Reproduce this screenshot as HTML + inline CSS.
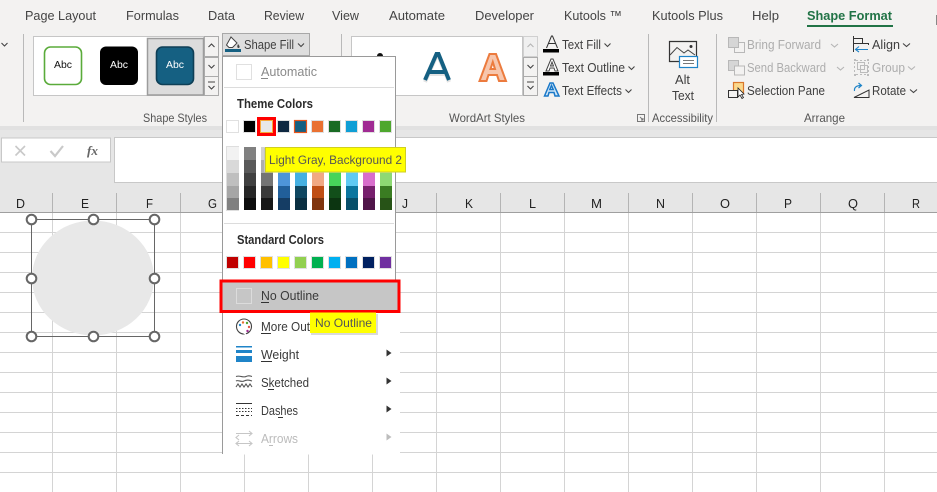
<!DOCTYPE html>
<html><head><meta charset="utf-8"><title>Shape Format</title>
<style>
html,body{margin:0;padding:0;background:#fff;width:937px;height:492px;overflow:hidden}
svg{display:block;font-family:"Liberation Sans",sans-serif}
text{font-size:12.5px;fill:#444}
.tab{font-size:13px;fill:#444}
.lab{font-size:12px;fill:#555}
.rb{fill:#3f3f3f}
.dis{fill:#adadad}
.mn{fill:#3a3a3a}
.b{font-weight:bold;fill:#2b2b2b;font-size:12.5px}
.chev{fill:none;stroke:#444;stroke-width:1.1}
.chevd{fill:none;stroke:#b5b5b5;stroke-width:1.1}
.hd{font-size:12.5px;fill:#222}
</style></head><body>
<svg width="937" height="492" viewBox="0 0 937 492" xmlns="http://www.w3.org/2000/svg">
<defs>
<pattern id="gv" width="64" height="20" patternUnits="userSpaceOnUse" x="52" y="212">
<path d="M.5 0V20M0 .5H64" stroke="#d4d4d4" fill="none"/>
</pattern>
</defs>
<!-- grid -->
<rect x="0" y="212" width="937" height="280" fill="#fff"/>
<rect x="0" y="212" width="937" height="280" fill="url(#gv)"/>
<!-- formula band -->
<rect x="0" y="126" width="937" height="86" fill="#e6e6e6"/>
<rect x="0" y="212" width="937" height="1" fill="#9f9f9f"/>
<g stroke="#b4b4b4"><path d="M52.5 193V212M116.5 193V212M180.5 193V212M244.5 193V212M308.5 193V212M372.5 193V212M436.5 193V212M500.5 193V212M564.5 193V212M628.5 193V212M692.5 193V212M756.5 193V212M820.5 193V212M884.5 193V212"/></g>
<g>
<text class="hd" x="16" y="208" textLength="9" lengthAdjust="spacingAndGlyphs">D</text>
<text class="hd" x="81" y="208" textLength="8" lengthAdjust="spacingAndGlyphs">E</text>
<text class="hd" x="146" y="208" textLength="7" lengthAdjust="spacingAndGlyphs">F</text>
<text class="hd" x="208" y="208" textLength="9" lengthAdjust="spacingAndGlyphs">G</text>
<text class="hd" x="402" y="208" textLength="6" lengthAdjust="spacingAndGlyphs">J</text>
<text class="hd" x="465" y="208" textLength="8" lengthAdjust="spacingAndGlyphs">K</text>
<text class="hd" x="529" y="208" textLength="7" lengthAdjust="spacingAndGlyphs">L</text>
<text class="hd" x="591" y="208" textLength="11" lengthAdjust="spacingAndGlyphs">M</text>
<text class="hd" x="656" y="208" textLength="9" lengthAdjust="spacingAndGlyphs">N</text>
<text class="hd" x="720" y="208" textLength="10" lengthAdjust="spacingAndGlyphs">O</text>
<text class="hd" x="784" y="208" textLength="8" lengthAdjust="spacingAndGlyphs">P</text>
<text class="hd" x="848" y="208" textLength="10" lengthAdjust="spacingAndGlyphs">Q</text>
<text class="hd" x="912" y="208" textLength="8" lengthAdjust="spacingAndGlyphs">R</text>
</g>
<!-- formula bar -->
<rect x="1.5" y="138" width="109" height="24" fill="#fff" stroke="#c8c8c8"/>
<path d="M15.5 146L25 155.500M25 146L15.500 155.500" stroke="#c9c9c9" stroke-width="1.600" fill="none"/>
<path d="M50.500 151L55 156L63 146" stroke="#c9c9c9" stroke-width="2.200" fill="none"/>
<text x="87" y="155" textLength="11" lengthAdjust="spacingAndGlyphs" style="font-family:'Liberation Serif',serif;font-style:italic;font-weight:bold;font-size:13px;fill:#666">fx</text>
<rect x="114.500" y="137.500" width="830" height="45" fill="#fff" stroke="#c8c8c8"/>
<!-- ribbon -->
<rect x="0" y="0" width="937" height="126" fill="#f3f2f1"/>
<rect x="0" y="126" width="937" height="4" fill="#e1e1e1"/>
<text class="tab" x="25" y="20" textLength="71" lengthAdjust="spacingAndGlyphs">Page Layout</text>
<text class="tab" x="126" y="20" textLength="53" lengthAdjust="spacingAndGlyphs">Formulas</text>
<text class="tab" x="208" y="20" textLength="27" lengthAdjust="spacingAndGlyphs">Data</text>
<text class="tab" x="264" y="20" textLength="40" lengthAdjust="spacingAndGlyphs">Review</text>
<text class="tab" x="332" y="20" textLength="27" lengthAdjust="spacingAndGlyphs">View</text>
<text class="tab" x="389" y="20" textLength="56" lengthAdjust="spacingAndGlyphs">Automate</text>
<text class="tab" x="475" y="20" textLength="59" lengthAdjust="spacingAndGlyphs">Developer</text>
<text class="tab" x="564" y="20" textLength="58" lengthAdjust="spacingAndGlyphs">Kutools ™</text>
<text class="tab" x="652" y="20" textLength="71" lengthAdjust="spacingAndGlyphs">Kutools Plus</text>
<text class="tab" x="752" y="20" textLength="27" lengthAdjust="spacingAndGlyphs">Help</text>
<text class="tab" x="807" y="20" textLength="85" lengthAdjust="spacingAndGlyphs" style="fill:#217346;font-weight:bold;font-size:12.500px">Shape Format</text>
<rect x="807" y="25" width="86" height="2" fill="#217346"/>
<rect x="936" y="15" width="1" height="10" fill="#888"/>
<path class="chev" d="M1.500 43L4.500 46L7.500 43"/>
<!-- separators -->
<g stroke="#b9b9b9"><path d="M23.500 34V122M341.500 34V122M648.500 34V122M716.500 34V122"/></g>
<!-- Shape styles gallery -->
<rect x="33.500" y="36.500" width="170" height="59" fill="#fff" stroke="#c6c6c6"/>
<rect x="44.500" y="47" width="37" height="37.500" rx="6" fill="#fff" stroke="#5aab3a" stroke-width="1.600"/>
<text x="54" y="68" textLength="18" lengthAdjust="spacingAndGlyphs" style="font-size:10.500px;fill:#111">Abc</text>
<rect x="100" y="46.500" width="38" height="38.500" rx="6" fill="#000"/>
<text x="110" y="68" textLength="18" lengthAdjust="spacingAndGlyphs" style="font-size:10.500px;fill:#fff">Abc</text>
<rect x="147.500" y="38.500" width="56" height="56.500" fill="#dcdcdc" stroke="#9c9c9c" stroke-width="1.500"/>
<rect x="156.500" y="47" width="37" height="37.500" rx="6" fill="#156082" stroke="#0e3f56" stroke-width="1.600"/>
<text x="166" y="68" textLength="18" lengthAdjust="spacingAndGlyphs" style="font-size:10.500px;fill:#fff">Abc</text>
<g fill="#f3f2f1" stroke="#ababab"><rect x="204.500" y="36.500" width="14" height="20"/><rect x="204.500" y="57.500" width="14" height="19"/><rect x="204.500" y="76.500" width="14" height="19"/></g>
<path class="chev" d="M208.500 47L211.500 44L214.500 47M208.500 65L211.500 68L214.500 65M208 82H215M208.500 86L211.500 89L214.500 86"/>
<text class="lab" x="143" y="122" textLength="64" lengthAdjust="spacingAndGlyphs">Shape Styles</text>
<!-- WordArt gallery -->
<rect x="351.500" y="36.500" width="171" height="59" fill="#fff" stroke="#c6c6c6"/>
<circle cx="380" cy="56" r="3" fill="#111"/>
<path d="M425 80L436.500 54H438.500L449 80M429.500 72H445" fill="none" stroke="#e3e3e3" stroke-width="4" transform="translate(0,2)"/>
<path d="M425 80L436.500 54H438.500L449 80M429.500 72H445" fill="none" stroke="#156082" stroke-width="4"/>
<path d="M479.500 81L489.500 54H496L506 81H499L497 75H488.500L486.500 81ZM490.500 69H495L492.800 62Z" fill="#f7c6ad" stroke="#ec7b3e" stroke-width="2"/>
<g stroke="#ababab"><rect x="523.500" y="36.500" width="14" height="20" fill="#f0f0f0" stroke="#d0d0d0"/><rect x="523.500" y="57.500" width="14" height="19" fill="#f3f2f1"/><rect x="523.500" y="76.500" width="14" height="19" fill="#f3f2f1"/></g>
<path class="chevd" d="M527.500 47L530.500 44L533.500 47"/>
<path class="chev" d="M527.500 65L530.500 68L533.500 65M527 82H534M527.500 86L530.500 89L533.500 86"/>
<text class="lab" x="449" y="122" textLength="76" lengthAdjust="spacingAndGlyphs">WordArt Styles</text>
<path d="M637.500 114.500H644.500V121.500H637.500ZM640 117L643 120M643 118V120H641" fill="none" stroke="#777"/>
<!-- text fill etc -->
<path d="M546.500 48L551.500 36H552.500L557.500 48M548.500 43.500H555.500" fill="none" stroke="#333" stroke-width="1"/>
<rect x="543" y="49" width="16" height="3.500" fill="#000"/>
<text class="rb" x="562" y="49" textLength="39" lengthAdjust="spacingAndGlyphs">Text Fill</text>
<path class="chev" d="M604.500 43.500L607.500 46.500L610.500 43.500"/>
<path d="M546 71L551 59H553L558 71H555L554 68H550L549 71ZM550.500 66H553.500L552 62Z" fill="#fff" stroke="#444" stroke-width="1"/>
<rect x="543" y="72" width="16" height="3.500" fill="#000"/>
<text class="rb" x="562" y="72" textLength="63" lengthAdjust="spacingAndGlyphs">Text Outline</text>
<path class="chev" d="M628.500 66.500L631.500 69.500L634.500 66.500"/>
<path d="M544.500 96L550 83H553L559 96H555L554 92.500H549L548 96ZM549.800 89.500H553.200L551.500 85.500Z" fill="#cfe5f7" stroke="#1978c8" stroke-width="1.500"/>
<text class="rb" x="562" y="95" textLength="60" lengthAdjust="spacingAndGlyphs">Text Effects</text>
<path class="chev" d="M625.500 89.500L628.500 92.500L631.500 89.500"/>
<!-- alt text -->
<path d="M679 61.500H669.500V41.500H696.500V56" fill="none" stroke="#333" stroke-width="1.200"/>
<path d="M670 55L677 47.500L684 53L688 50L695 55" fill="none" stroke="#444"/>
<circle cx="691" cy="46.500" r="1.500" fill="#333"/>
<rect x="679.500" y="56.500" width="18" height="11" fill="#fff" stroke="#1f84c8" stroke-width="1.200"/>
<path d="M683 60.500H694M683 63.500H694" stroke="#777"/>
<text class="rb" x="675" y="84" textLength="15" lengthAdjust="spacingAndGlyphs">Alt</text>
<text class="rb" x="672" y="100" textLength="22" lengthAdjust="spacingAndGlyphs">Text</text>
<text class="lab" x="652" y="122" textLength="61" lengthAdjust="spacingAndGlyphs">Accessibility</text>
<!-- arrange -->
<rect x="728.500" y="37.500" width="10" height="10" fill="#d6d6d6" stroke="#b8b8b8"/>
<path d="M738.500 42.500H744.500V52.500H734.500V47.500" fill="none" stroke="#b8b8b8"/>
<text class="dis" x="747" y="49" textLength="74" lengthAdjust="spacingAndGlyphs">Bring Forward</text>
<path class="chevd" d="M831 44L834.500 47L838 44"/>
<path d="M728.500 60.500H738.500V66H734.500V70.500H728.500Z" fill="#d6d6d6" stroke="#b8b8b8"/>
<rect x="734.500" y="66" width="10" height="9" fill="#f3f2f1" stroke="#b8b8b8"/>
<text class="dis" x="747" y="72" textLength="79" lengthAdjust="spacingAndGlyphs">Send Backward</text>
<path class="chevd" d="M837 67L840.500 70L844 67"/>
<rect x="733.500" y="82.500" width="10" height="10" fill="#fcd88a" stroke="#d9772c" stroke-width="1.200"/>
<rect x="728.500" y="90.500" width="9" height="7" fill="#f3f2f1" stroke="#333"/>
<path d="M738 88L738 97L740 95L742 98.500L743.500 97.500L741.500 94.500L744 94Z" fill="#fff" stroke="#222" stroke-width=".8"/>
<text class="rb" x="747" y="95" textLength="78" lengthAdjust="spacingAndGlyphs">Selection Pane</text>
<path d="M853.500 36V52" stroke="#333"/>
<path d="M854 38.500H862.500V43.500H854M854 43.500H868.500V45" fill="none" stroke="#333"/>
<path d="M868 49.500H856M859 46.500L855.500 49.500L859 52" fill="none" stroke="#1f84c8" stroke-width="1.100"/>
<text class="rb" x="872" y="49" textLength="28" lengthAdjust="spacingAndGlyphs">Align</text>
<path class="chev" d="M903 43.500L906.500 46.500L910 43.500"/>
<g fill="none" stroke="#bcbcbc"><path d="M854 60H856M867 60H869M854 75H856M867 75H869" stroke-width="2"/><rect x="857.500" y="62.500" width="7" height="7"/><rect x="860.500" y="65.500" width="7" height="7"/><path d="M854.500 62V73M868.500 62V73M856 60.500H867M856 74.500H867" stroke-dasharray="2 2"/></g>
<text class="dis" x="872" y="72" textLength="33" lengthAdjust="spacingAndGlyphs">Group</text>
<path class="chevd" d="M908 66.500L911.500 69.500L915 66.500"/>
<path d="M854 97.500L869 90V97.500Z" fill="none" stroke="#333"/>
<path d="M854.500 91C854 87 857 85.500 861 85.500M858.500 83L861.500 85.500L858.500 88" fill="none" stroke="#1f84c8" stroke-width="1.200"/>
<text class="rb" x="872" y="95" textLength="34" lengthAdjust="spacingAndGlyphs">Rotate</text>
<path class="chev" d="M910 89.500L913.500 92.500L917 89.500"/>
<text class="lab" x="804" y="122" textLength="41" lengthAdjust="spacingAndGlyphs">Arrange</text>
<!-- shape -->
<ellipse cx="93" cy="278" rx="61" ry="57.500" fill="#e8e8e8"/>
<rect x="31.500" y="219.500" width="123" height="117" fill="none" stroke="#666"/>
<g fill="#fff" stroke="#666" stroke-width="2">
<circle cx="31.500" cy="219.500" r="4.800"/><circle cx="93.500" cy="219.500" r="4.800"/><circle cx="154.500" cy="219.500" r="4.800"/>
<circle cx="31.500" cy="278.500" r="4.800"/><circle cx="154.500" cy="278.500" r="4.800"/>
<circle cx="31.500" cy="336.500" r="4.800"/><circle cx="93.500" cy="336.500" r="4.800"/><circle cx="154.500" cy="336.500" r="4.800"/>
</g>
<!-- Shape Fill button -->
<rect x="222.500" y="33.500" width="87" height="22" fill="#dedede" stroke="#a8a8a8"/>
<path d="M231 37L237 43L232.500 47.500H229L226.500 45Z" fill="#fff" stroke="#444"/>
<path d="M238 44C240 46 240 48 238.500 48C237 48 237 46 238 44Z" fill="#444"/>
<rect x="225" y="49" width="16" height="3" fill="#156082"/>
<text class="rb" x="244" y="49" textLength="50" lengthAdjust="spacingAndGlyphs">Shape Fill</text>
<path class="chev" d="M298 43.500L301 46.500L304 43.500"/>
<!-- menu -->
<rect x="222.500" y="56.500" width="173.500" height="398" fill="#fff"/>
<rect x="396" y="280" width="4" height="175" fill="#fff"/>
<path d="M222.500 454V56.500H395.500V280" fill="none" stroke="#9a9a9a"/>
<rect x="236.500" y="64.500" width="15" height="15" fill="#fff" stroke="#e0e0e0"/>
<text x="261" y="76" textLength="56" lengthAdjust="spacingAndGlyphs" style="fill:#8a8a8a">Automatic</text>
<path d="M261 78.500H268" stroke="#888"/>
<path d="M224 87.500H394M224 223.500H394" stroke="#dcdcdc"/>
<text class="b" x="237" y="108" textLength="76" lengthAdjust="spacingAndGlyphs">Theme Colors</text>
<!-- top row -->
<g stroke="#e0e0e0">
<rect x="226.500" y="120.500" width="12" height="12" fill="#fff"/>
<rect x="243.500" y="120.500" width="12" height="12" fill="#000"/>
<rect x="277.500" y="120.500" width="12" height="12" fill="#0e2841"/>
<rect x="311.500" y="120.500" width="12" height="12" fill="#e97132"/>
<rect x="328.500" y="120.500" width="12" height="12" fill="#196b24"/>
<rect x="345.500" y="120.500" width="12" height="12" fill="#0f9ed5"/>
<rect x="362.500" y="120.500" width="12" height="12" fill="#a02b93"/>
<rect x="379.500" y="120.500" width="12" height="12" fill="#4ea72e"/>
</g>
<rect x="294.500" y="120.500" width="12" height="12" fill="#156082" stroke="#e8561c" stroke-width="1.200"/>
<rect x="258.500" y="118.500" width="16" height="16" fill="#e8e8e8" stroke="#ff0000" stroke-width="3"/>
<rect x="260.500" y="120.500" width="12" height="12" fill="#e8e8e8" stroke="#f6a93b"/>
<!-- shades -->
<g>
<rect x="226.500" y="146.500" width="12" height="64" fill="#fff" stroke="#dedede"/>
<rect x="227" y="147" width="12" height="13" fill="#f2f2f2"/><rect x="227" y="160" width="12" height="13" fill="#d9d9d9"/><rect x="227" y="173" width="12" height="13" fill="#bfbfbf"/><rect x="227" y="186" width="12" height="12" fill="#a6a6a6"/><rect x="227" y="198" width="12" height="12" fill="#808080"/>
<rect x="244" y="147" width="12" height="13" fill="#808080"/><rect x="244" y="160" width="12" height="13" fill="#595959"/><rect x="244" y="173" width="12" height="13" fill="#404040"/><rect x="244" y="186" width="12" height="12" fill="#262626"/><rect x="244" y="198" width="12" height="12" fill="#0d0d0d"/>
<rect x="261" y="147" width="12" height="13" fill="#d1d1d1"/><rect x="261" y="160" width="12" height="13" fill="#aeaeae"/><rect x="261" y="173" width="12" height="13" fill="#747474"/><rect x="261" y="186" width="12" height="12" fill="#3a3a3a"/><rect x="261" y="198" width="12" height="12" fill="#171717"/>
<rect x="278" y="147" width="12" height="13" fill="#dceaf7"/><rect x="278" y="160" width="12" height="13" fill="#a6caec"/><rect x="278" y="173" width="12" height="13" fill="#4e95d9"/><rect x="278" y="186" width="12" height="12" fill="#215f9a"/><rect x="278" y="198" width="12" height="12" fill="#153d64"/>
<rect x="295" y="147" width="12" height="13" fill="#c1e5f5"/><rect x="295" y="160" width="12" height="13" fill="#83caeb"/><rect x="295" y="173" width="12" height="13" fill="#45b0e1"/><rect x="295" y="186" width="12" height="12" fill="#0f4761"/><rect x="295" y="198" width="12" height="12" fill="#0a2f41"/>
<rect x="312" y="147" width="12" height="13" fill="#fbe3d6"/><rect x="312" y="160" width="12" height="13" fill="#f6c6ad"/><rect x="312" y="173" width="12" height="13" fill="#f1a983"/><rect x="312" y="186" width="12" height="12" fill="#c04f15"/><rect x="312" y="198" width="12" height="12" fill="#80350e"/>
<rect x="329" y="147" width="12" height="13" fill="#c1f0c8"/><rect x="329" y="160" width="12" height="13" fill="#83e28e"/><rect x="329" y="173" width="12" height="13" fill="#47d45a"/><rect x="329" y="186" width="12" height="12" fill="#124f1a"/><rect x="329" y="198" width="12" height="12" fill="#0c3511"/>
<rect x="346" y="147" width="12" height="13" fill="#caeefb"/><rect x="346" y="160" width="12" height="13" fill="#95dcf7"/><rect x="346" y="173" width="12" height="13" fill="#60caf3"/><rect x="346" y="186" width="12" height="12" fill="#0b769f"/><rect x="346" y="198" width="12" height="12" fill="#074f6a"/>
<rect x="363" y="147" width="12" height="13" fill="#f2ceef"/><rect x="363" y="160" width="12" height="13" fill="#e59edc"/><rect x="363" y="173" width="12" height="13" fill="#d86ecc"/><rect x="363" y="186" width="12" height="12" fill="#77206d"/><rect x="363" y="198" width="12" height="12" fill="#501549"/>
<rect x="380" y="147" width="12" height="13" fill="#d9f2d0"/><rect x="380" y="160" width="12" height="13" fill="#b4e5a2"/><rect x="380" y="173" width="12" height="13" fill="#8ed973"/><rect x="380" y="186" width="12" height="12" fill="#3a7c22"/><rect x="380" y="198" width="12" height="12" fill="#275317"/>
</g>
<!-- tooltip 1 -->
<rect x="264" y="148" width="3" height="24" fill="#c4c4c4"/>
<rect x="265.500" y="147.500" width="140" height="24.500" fill="#ffff00" stroke="#cfcf20"/>
<text x="269" y="164" textLength="133" lengthAdjust="spacingAndGlyphs" style="fill:#555;font-size:12px">Light Gray, Background 2</text>
<!-- standard -->
<text class="b" x="237" y="244" textLength="87" lengthAdjust="spacingAndGlyphs">Standard Colors</text>
<g stroke="#e0e0e0">
<rect x="226.500" y="256.500" width="12" height="12" fill="#c00000"/>
<rect x="243.500" y="256.500" width="12" height="12" fill="#ff0000"/>
<rect x="260.500" y="256.500" width="12" height="12" fill="#ffc000"/>
<rect x="277.500" y="256.500" width="12" height="12" fill="#ffff00"/>
<rect x="294.500" y="256.500" width="12" height="12" fill="#92d050"/>
<rect x="311.500" y="256.500" width="12" height="12" fill="#00b050"/>
<rect x="328.500" y="256.500" width="12" height="12" fill="#00b0f0"/>
<rect x="345.500" y="256.500" width="12" height="12" fill="#0070c0"/>
<rect x="362.500" y="256.500" width="12" height="12" fill="#002060"/>
<rect x="379.500" y="256.500" width="12" height="12" fill="#7030a0"/>
</g>
<!-- no outline highlighted -->
<rect x="221" y="281" width="178" height="30.500" fill="#c6c6c6" stroke="#ff0000" stroke-width="3"/>
<rect x="236.500" y="288.500" width="15" height="15" fill="#c6c6c6" stroke="#dcdcdc"/>
<text class="mn" x="261" y="300" textLength="58" lengthAdjust="spacingAndGlyphs">No Outline</text>
<path d="M261 302.500H269" stroke="#333"/>
<!-- More -->
<circle cx="244" cy="326.500" r="7.500" fill="#fff" stroke="#444" stroke-width="1.100"/>
<path d="M239 331L243 328.500L246 335" fill="#fff" stroke="#fff" stroke-width="1"/>
<circle cx="240" cy="325" r="1.200" fill="#1f84c8"/><circle cx="243" cy="322.500" r="1.200" fill="#e97132"/><circle cx="247" cy="323" r="1.200" fill="#4ea72e"/><circle cx="249" cy="327" r="1.200" fill="#e2574c"/><circle cx="247.500" cy="331" r="1.200" fill="#a02b93"/>
<text class="mn" x="261" y="331" textLength="49" lengthAdjust="spacingAndGlyphs">More Out</text>
<path d="M261 333.500H271" stroke="#333"/>
<!-- tooltip 2 -->
<rect x="311" y="314" width="67" height="21" fill="#d9d9d9"/>
<rect x="310" y="312.500" width="66" height="20.500" fill="#ffff00"/>
<text x="315" y="327" textLength="57" lengthAdjust="spacingAndGlyphs" style="fill:#555;font-size:12px">No Outline</text>
<!-- weight -->
<rect x="236" y="346" width="16" height="1.500" fill="#1f84c8"/><rect x="236" y="350" width="16" height="3" fill="#1f84c8"/><rect x="236" y="356" width="16" height="6" fill="#1f84c8"/>
<text class="mn" x="261" y="359" textLength="38" lengthAdjust="spacingAndGlyphs">Weight</text>
<path d="M261 361.500H272" stroke="#333"/>
<path d="M386.500 349.500L391.500 353L386.500 356.500Z" fill="#333"/>
<!-- sketched -->
<path d="M236 376.500C240 375 243 378 246 376.500S250 376 252 376.500M236 381C238 379.500 241 382.500 244 381S249 380 252 381M236 387L238 384L240 387L242 384L244 387L246 384L248 387L250 384L252 387" fill="none" stroke="#555" stroke-width="1.100"/>
<text class="mn" x="261" y="387" textLength="48" lengthAdjust="spacingAndGlyphs">Sketched</text>
<path d="M268 389.500H274" stroke="#333"/>
<path d="M386.500 377.500L391.500 381L386.500 384.500Z" fill="#333"/>
<!-- dashes -->
<path d="M236 403.500H252" stroke="#333"/>
<path d="M236 408.500H252M236 411.500H252" stroke="#333" stroke-dasharray="1.500 1.500"/>
<path d="M236 415.500H252" stroke="#333" stroke-dasharray="3 2"/>
<text class="mn" x="261" y="415" textLength="37" lengthAdjust="spacingAndGlyphs">Dashes</text>
<path d="M278 417.500H283" stroke="#333"/>
<path d="M386.500 405.500L391.500 409L386.500 412.500Z" fill="#333"/>
<!-- arrows -->
<path d="M236 433.500H252M249 431L252 433.500L249 436M236 443.500H252M239 441L236 443.500L239 446M249 441L252 443.500L249 446M239 435L236 437.500L239 440" fill="none" stroke="#c6c6c6" stroke-width="1.100"/>
<text class="dis" x="261" y="443" textLength="37" lengthAdjust="spacingAndGlyphs" style="fill:#bbb">Arrows</text>
<path d="M269 445.500H273" stroke="#bbb"/>
<path d="M386.500 433.500L391.500 437L386.500 440.500Z" fill="#bdbdbd"/>
</svg>
</body></html>
